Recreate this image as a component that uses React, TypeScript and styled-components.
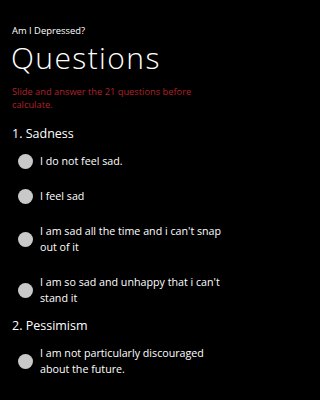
import React from 'react'
import styled, { createGlobalStyle } from 'styled-components'

const GlobalStyle = createGlobalStyle`
  html, body {
    margin: 0;
    padding: 0;
    background: #000;
  }
  body {
    font-family: "Open Sans", "Noto Sans", "Liberation Sans", sans-serif;
    color: #fff;
  }
`

const Page = styled.div`
  width: 240px;
  height: 400px;
  overflow: hidden;
  background: #000;
  padding: 25px 12px 0 12px;
  box-sizing: border-box;
`

const AppTitle = styled.div`
  font-size: 9.4px;
  line-height: 12px;
  font-weight: 400;
`

const PageTitle = styled.h1`
  margin: 3.4px 0 0 -1px;
  font-size: 30px;
  line-height: 36px;
  font-weight: 300;
  letter-spacing: 1.4px;
`

const Hint = styled.p`
  margin: 8.6px 0 0 0;
  font-size: 9.3px;
  line-height: 13px;
  color: #b0202b;
  max-width: 200px;
`

const SectionTitle = styled.h2<{ $first?: boolean }>`
  margin: ${({ $first }) => ($first ? '15px' : '2px')} 0 2px 0;
  font-size: 12.5px;
  line-height: 16px;
  font-weight: 400;
`

const OptionList = styled.div`
  display: flex;
  flex-direction: column;
`

const Option = styled.label`
  display: flex;
  align-items: center;
  gap: 7.5px;
  padding: 9.5px 0 9.5px 5.5px;
`

const Radio = styled.span`
  flex-shrink: 0;
  width: 15px;
  height: 15px;
  border-radius: 50%;
  background: #c9c9c9;
`

const OptionText = styled.span`
  font-size: 10.7px;
  line-height: 16px;
  max-width: 188px;
`

interface Question {
  title: string
  answers: string[]
}

const questions: Question[] = [
  {
    title: '1. Sadness',
    answers: [
      'I do not feel sad.',
      'I feel sad',
      "I am sad all the time and i can't snap out of it",
      "I am so sad and unhappy that i can't stand it",
    ],
  },
  {
    title: '2. Pessimism',
    answers: ['I am not particularly discouraged about the future.'],
  },
]

const App: React.FC = () => {
  return (
    <>
      <GlobalStyle />
      <Page>
        <AppTitle>Am I Depressed?</AppTitle>
        <PageTitle>Questions</PageTitle>
        <Hint>Slide and answer the 21 questions before calculate.</Hint>
        {questions.map((question, qi) => (
          <React.Fragment key={question.title}>
            <SectionTitle $first={qi === 0}>{question.title}</SectionTitle>
            <OptionList>
              {question.answers.map((answer) => (
                <Option key={answer}>
                  <Radio />
                  <OptionText>{answer}</OptionText>
                </Option>
              ))}
            </OptionList>
          </React.Fragment>
        ))}
      </Page>
    </>
  )
}

export default App
